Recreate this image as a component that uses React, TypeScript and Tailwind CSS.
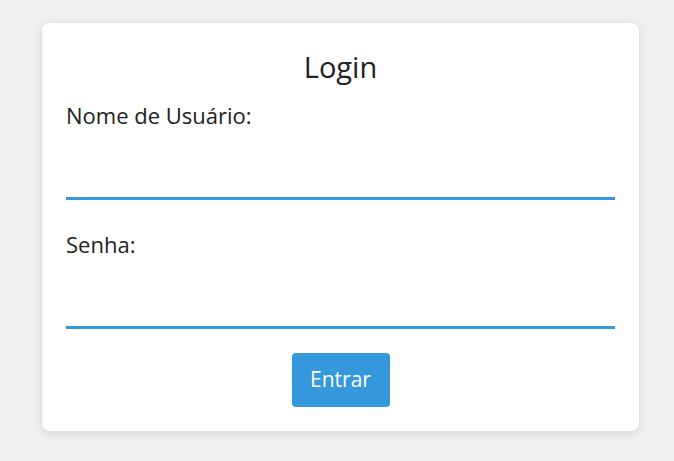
const LoginCard = () => {
  return (
    <div className="min-h-[461px] bg-[#f0f0f0] pt-[23px] font-['Open_Sans',sans-serif] text-[#222]">
      <div className="ml-[42px] w-[597px] rounded-lg bg-white p-6 shadow-[0_2px_10px_rgba(0,0,0,0.12)]">
        <h2 className="text-center text-[29px] leading-[40px]">Login</h2>
        <form className="mt-[13px]" onSubmit={(e) => e.preventDefault()}>
          <label className="block text-[22px] leading-[30px]">Nome de Usuário:</label>
          <input type="text" className="mt-[10px] block h-[60px] w-full border-b-[3px] border-[#3498db] outline-none" />
          <label className="mt-[29px] block text-[22px] leading-[30px]">Senha:</label>
          <input type="password" className="mt-[10px] block h-[60px] w-full border-b-[3px] border-[#3498db] outline-none" />
          <div className="mt-6 flex justify-center">
            <button className="h-[54px] w-[98px] rounded bg-[#3498db] text-[21px] text-white">Entrar</button>
          </div>
        </form>
      </div>
    </div>
  );
};

export default function App() {
  return <LoginCard />;
}
